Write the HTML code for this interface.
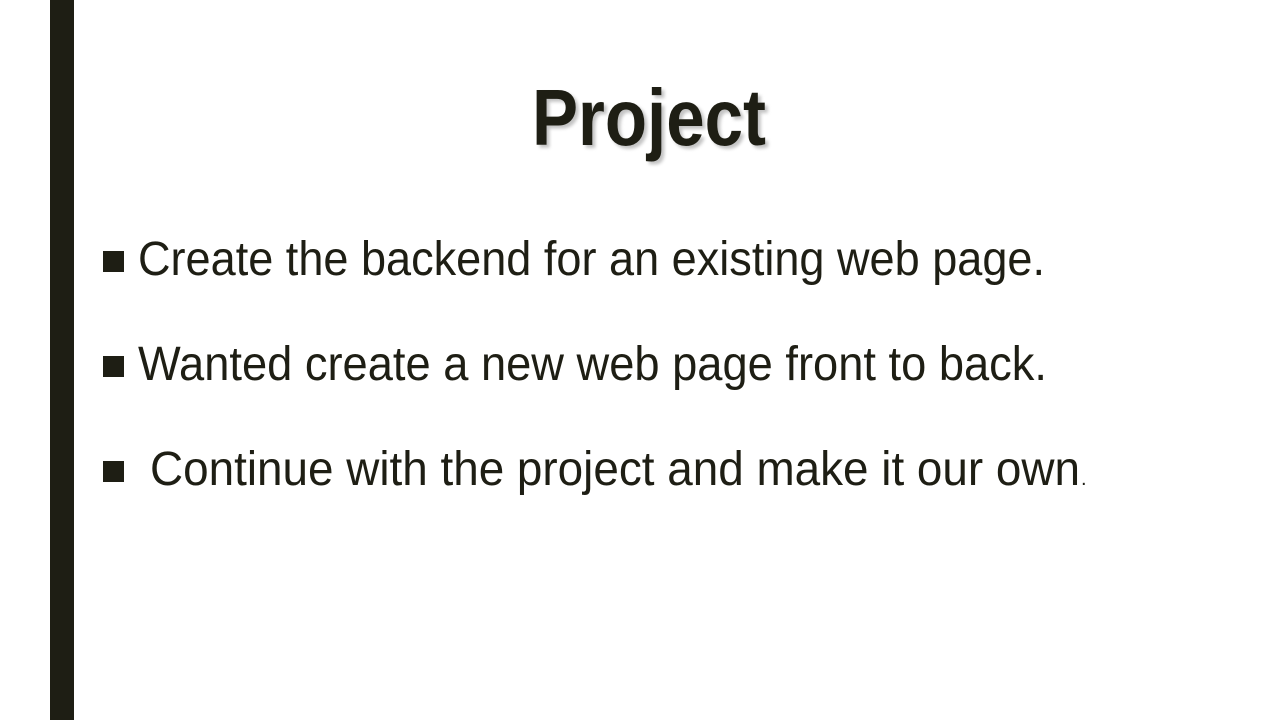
<!DOCTYPE html>
<html><head><style>
html,body{margin:0;padding:0;background:#fff;width:1280px;height:720px;overflow:hidden}
</style></head><body>
<svg width="1280" height="720" xmlns="http://www.w3.org/2000/svg">
<defs><filter id="b"><feGaussianBlur stdDeviation="1.5"/></filter></defs>
<rect x="50" y="0" width="24" height="720" fill="#1e1e14"/>
<text x="535" y="148" font-family="Liberation Sans Narrow, Liberation Sans, sans-serif" font-weight="bold" font-size="80" fill="#888" opacity="0.5" filter="url(#b)" textLength="234" lengthAdjust="spacingAndGlyphs">Project</text>
<text x="532" y="145" font-family="Liberation Sans Narrow, Liberation Sans, sans-serif" font-weight="bold" font-size="80" fill="#1e1e14" textLength="234" lengthAdjust="spacingAndGlyphs">Project</text>
<g font-family="Liberation Sans Narrow, Liberation Sans, sans-serif" font-size="48" fill="#1e1e14">
<rect x="103" y="251" width="21" height="21"/>
<text x="138" y="275" textLength="907" lengthAdjust="spacingAndGlyphs">Create the backend for an existing web page.</text>
<rect x="103" y="356" width="21" height="21"/>
<text x="138" y="380" textLength="909" lengthAdjust="spacingAndGlyphs">Wanted create a new web page front to back.</text>
<rect x="103" y="461" width="21" height="21"/>
<text x="150" y="485" textLength="930" lengthAdjust="spacingAndGlyphs">Continue with the project and make it our own</text>
<text x="1081" y="485" font-size="20">.</text>
</g>
</svg>
</body></html>
